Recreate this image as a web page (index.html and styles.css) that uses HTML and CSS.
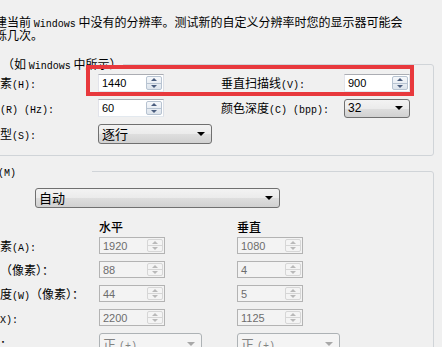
FILE: index.html
```html
<!DOCTYPE html>
<html lang="zh-CN">
<head>
<meta charset="utf-8">
<title>自定义分辨率</title>
<link rel="stylesheet" href="styles.css">
</head>
<body>
<div class="page">
  <p class="intro">建当前 <span class="en">Windows</span> 中没有的分辨率。测试新的自定义分辨率时您的显示器可能会<br>烁几次。</p>

  <fieldset class="group g1">
    <legend class="title">（如 <span class="en">Windows</span> 中所示）</legend>
    <div class="grid1">
      <span class="lbl">素<span class="en">(H):</span></span>
      <div class="spinner"><span class="val">1440</span><span class="spin"><i class="up"></i><i class="dn"></i></span></div>
      <span></span>
      <span class="lbl">垂直扫描线<span class="en">(V):</span></span>
      <div class="spinner"><span class="val">900</span><span class="spin"><i class="up"></i><i class="dn"></i></span></div>

      <span class="lbl"><span class="en">(R) (Hz):</span></span>
      <div class="spinner"><span class="val">60</span><span class="spin"><i class="up"></i><i class="dn"></i></span></div>
      <span></span>
      <span class="lbl">颜色深度<span class="en">(C) (bpp):</span></span>
      <div class="combo num"><span class="val">32</span><span class="arrow"></span></div>

      <span class="lbl">型<span class="en">(S):</span></span>
      <div class="combo wide1"><span class="val">逐行</span><span class="arrow"></span></div>
    </div>
  </fieldset>

  <fieldset class="group g2">
    <legend class="title2"><span class="en">(M)</span></legend>
    <div class="combo auto"><span class="val">自动</span><span class="arrow"></span></div>
    <div class="heads">
      <span class="head h1">水平</span>
      <span class="head h2">垂直</span>
    </div>
    <div class="grid2">
      <span class="lbl">素<span class="en">(A):</span></span>
      <div class="spinner dis"><span class="val">1920</span><span class="spin"><i class="up"></i><i class="dn"></i></span></div>
      <span></span>
      <div class="spinner dis"><span class="val">1080</span><span class="spin"><i class="up"></i><i class="dn"></i></span></div>

      <span class="lbl">（像素）：</span>
      <div class="spinner dis"><span class="val">88</span><span class="spin"><i class="up"></i><i class="dn"></i></span></div>
      <span></span>
      <div class="spinner dis"><span class="val">4</span><span class="spin"><i class="up"></i><i class="dn"></i></span></div>

      <span class="lbl">度<span class="en">(W)</span>（像素）：</span>
      <div class="spinner dis"><span class="val">44</span><span class="spin"><i class="up"></i><i class="dn"></i></span></div>
      <span></span>
      <div class="spinner dis"><span class="val">5</span><span class="spin"><i class="up"></i><i class="dn"></i></span></div>

      <span class="lbl"><span class="en">X):</span></span>
      <div class="spinner dis"><span class="val">2200</span><span class="spin"><i class="up"></i><i class="dn"></i></span></div>
      <span></span>
      <div class="spinner dis"><span class="val">1125</span><span class="spin"><i class="up"></i><i class="dn"></i></span></div>

      <span class="lbl">：</span>
      <div class="combo dis pol"><span class="val">正 <span class="en">(+)</span></span><span class="arrow"></span></div>
      <div class="combo dis pol c4"><span class="val">正 <span class="en">(+)</span></span><span class="arrow"></span></div>
    </div>
  </fieldset>
</div>
<div class="mark"></div>
</body>
</html>
```

FILE: styles.css
```css
* { box-sizing: border-box; }

html, body {
  margin: 0;
  padding: 0;
}

body {
  position: relative;
  width: 442px;
  height: 347px;
  overflow: hidden;
  background: #f0f0f0;
  color: #000;
  font-family: "Noto Sans CJK SC", sans-serif;
  font-size: 12px;
}

.page {
  margin-left: -10px;
  width: 444px;
}

.en {
  font-family: "Liberation Mono", monospace;
  font-size: 10px;
  line-height: 0;
}

.intro {
  margin: 0;
  padding: 15px 0 0 5px;
  line-height: 13px;
  white-space: nowrap;
}

.group {
  min-width: 0;
  margin: 16px 0 0;
  padding: 3px 0 11px 9px;
  border: 1px solid #d0d4d8;
  border-radius: 3px;
}

.title {
  padding: 0 2px;
  height: 14px;
  line-height: 14px;
  white-space: nowrap;
}

.title2 {
  margin-left: -2px;
  padding: 0 76px 0 0;
  height: 14px;
  line-height: 14px;
}

.g2 {
  margin-top: 8px;
  padding-top: 10px;
}

.lbl {
  white-space: nowrap;
  line-height: 14px;
}

.grid1 {
  display: grid;
  grid-template-columns: 98px 66px 57px 123px 66px;
  grid-template-rows: 18px 18px 20px;
  row-gap: 7px;
  align-items: center;
}

.grid2 {
  display: grid;
  grid-template-columns: 99px 66px 72px 66px;
  grid-template-rows: repeat(4, 17px) 21px;
  row-gap: 7px;
  align-items: center;
  margin-top: 2px;
}

.heads {
  display: grid;
  grid-template-columns: 99px 138px 66px;
  height: 16px;
  margin-top: 11px;
  align-items: center;
}

.head {
  line-height: 16px;
  font-size: 12px;
  font-weight: 500;
}

.h1 { grid-column: 2; }
.h2 { grid-column: 3; }

/* spinner */
.spinner {
  display: flex;
  align-items: center;
  width: 66px;
  height: 18px;
  padding-left: 3px;
  background: #fff;
  border: 1px solid #abadb3;
  border-color: #abadb3 #dbdfe6 #e3e9ef #e2e3ea;
  font-family: "Liberation Sans", sans-serif;
  font-size: 11px;
}

.spin {
  display: flex;
  flex-direction: column;
  width: 16px;
  height: 14px;
  margin-left: auto;
  margin-right: 1px;
  border: 1px solid #b7c3d1;
  border-radius: 2px;
  background: linear-gradient(#f6f8fb, #dde4ec);
}

.spin i {
  flex: 1;
  display: flex;
  align-items: center;
  justify-content: center;
}

.spin .up { border-bottom: 1px solid #b7c3d1; }

.spin .up::before {
  content: "";
  border-left: 3px solid transparent;
  border-right: 3px solid transparent;
  border-bottom: 3px solid #4a5d7e;
}

.spin .dn::before {
  content: "";
  border-left: 3px solid transparent;
  border-right: 3px solid transparent;
  border-top: 3px solid #4a5d7e;
}

.spinner.dis {
  height: 17px;
  background: #f3f3f3;
  border: 1px solid #b3b3b3;
  color: #6d6d6d;
}

.spinner.dis .spin {
  height: 13px;
  border-color: #d6d6d6;
  background: #f4f4f4;
}

.spinner.dis .spin .up { border-bottom-color: #d6d6d6; }
.spinner.dis .spin .up::before { border-bottom-color: #b9b9b9; }
.spinner.dis .spin .dn::before { border-top-color: #b9b9b9; }

/* combobox */
.combo {
  display: flex;
  align-items: center;
  height: 20px;
  padding-left: 3px;
  border: 1px solid #707070;
  border-radius: 3px;
  background: linear-gradient(#f3f3f3 0%, #ebebeb 50%, #dedede 51%, #d1d1d1 100%);
  font-size: 13px;
}

.combo .val {
  line-height: 16px;
  white-space: nowrap;
}

.combo .arrow {
  margin-left: auto;
  margin-right: 6px;
  border-left: 4px solid transparent;
  border-right: 4px solid transparent;
  border-top: 4px solid #000;
}

.combo.num {
  width: 66px;
  height: 19px;
  font-family: "Liberation Sans", sans-serif;
  font-size: 12px;
}

.combo.wide1 {
  grid-column: 2 / span 2;
  justify-self: start;
  width: 114px;
}

.combo.auto {
  width: 245px;
  margin-left: 35px;
}

.combo.dis {
  border-color: #adb2b5;
  background: #f4f4f4;
  color: #838383;
}

.combo.dis .arrow {
  border-top-color: #a8a8a8;
}

.combo.pol {
  grid-column: 2 / span 2;
  justify-self: start;
  align-self: start;
  width: 103px;
  height: 21px;
}

.combo.pol.c4 {
  grid-column: 4;
}

/* annotation overlay */
.mark {
  position: absolute;
  left: 86px;
  top: 65px;
  width: 328px;
  height: 31px;
  border: 4px solid #e8393d;
}
```
